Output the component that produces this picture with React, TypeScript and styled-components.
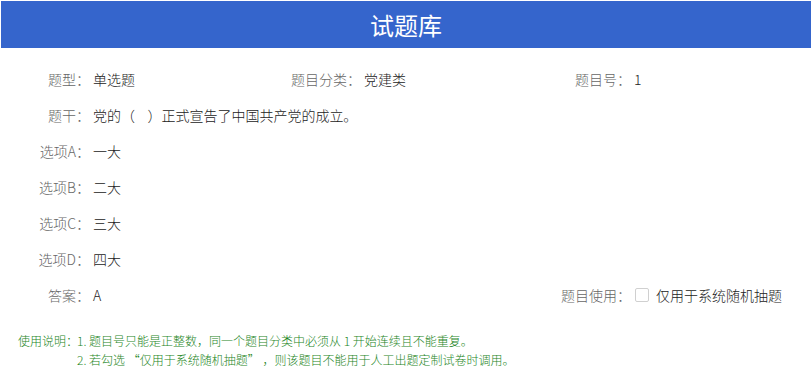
import React from "react";
import styled, { createGlobalStyle } from "styled-components";

const Global = createGlobalStyle`
  html, body { margin: 0; padding: 0; background: #fff; }
  body { font-family: "Noto Sans CJK SC", "Noto Sans", sans-serif; }
`;

const Page = styled.div`
  width: 812px;
  height: 374px;
  overflow: hidden;
  padding-top: 1px;
  box-sizing: border-box;
`;

const Header = styled.header`
  margin: 0 1px 0 1px;
  height: 47px;
  background: #3565cc;
  color: #fff;
  display: flex;
  align-items: center;
  justify-content: center;
  font-size: 24px;
`;

const Form = styled.div`
  display: flex;
  flex-direction: column;
  padding-top: 13px;
`;

const Row = styled.div`
  display: grid;
  grid-template-columns: 270px 270px 270px;
  height: 36px;
  align-items: center;
`;

const Field = styled.div<{ $col?: number; $span?: number }>`
  display: flex;
  align-items: center;
  grid-column: ${(p) => p.$col ?? 1} / span ${(p) => p.$span ?? 1};
  font-size: 14px;
  line-height: 20px;
  font-weight: 300;
  white-space: nowrap;
`;

const Label = styled.span<{ $w?: number }>`
  width: ${(p) => p.$w ?? 90}px;
  text-align: right;
  color: #666;
  flex: none;
`;

const Value = styled.span<{ $gap?: number }>`
  color: #222;
  margin-left: ${(p) => p.$gap ?? 3}px;
`;

const Check = styled.span`
  width: 12px;
  height: 12px;
  border: 1px solid #d0d0d0;
  border-radius: 2px;
  margin-left: 4px;
  margin-right: 7px;
  flex: none;
  background: #fff;
`;

const Notes = styled.div`
  display: grid;
  grid-template-columns: 59px auto;
  margin-top: 18px;
  padding-left: 18px;
  font-size: 12px;
  line-height: 19px;
  font-weight: 300;
  color: #1d861d;
  white-space: nowrap;
`;

const NoteLabel = styled.span``;
const NoteList = styled.div`
  display: flex;
  flex-direction: column;
`;

export default function App() {
  return (
    <Page>
      <Global />
      <Header>试题库</Header>
      <Form>
        <Row>
          <Field $col={1}>
            <Label>题型：</Label>
            <Value>单选题</Value>
          </Field>
          <Field $col={2}>
            <Label $w={91}>题目分类：</Label>
            <Value>党建类</Value>
          </Field>
          <Field $col={3}>
            <Label $w={91}>题目号：</Label>
            <Value>1</Value>
          </Field>
        </Row>
        <Row>
          <Field $col={1} $span={3}>
            <Label>题干：</Label>
            <Value>党的（&nbsp;&nbsp;&nbsp;&nbsp;）正式宣告了中国共产党的成立。</Value>
          </Field>
        </Row>
        <Row>
          <Field>
            <Label>选项A：</Label>
            <Value>一大</Value>
          </Field>
        </Row>
        <Row>
          <Field>
            <Label>选项B：</Label>
            <Value>二大</Value>
          </Field>
        </Row>
        <Row>
          <Field>
            <Label>选项C：</Label>
            <Value>三大</Value>
          </Field>
        </Row>
        <Row>
          <Field>
            <Label>选项D：</Label>
            <Value>四大</Value>
          </Field>
        </Row>
        <Row>
          <Field $col={1}>
            <Label>答案：</Label>
            <Value>A</Value>
          </Field>
          <Field $col={3}>
            <Label $w={91}>题目使用：</Label>
            <Check />
            <Value $gap={0}>仅用于系统随机抽题</Value>
          </Field>
        </Row>
      </Form>
      <Notes>
        <NoteLabel>使用说明：</NoteLabel>
        <NoteList>
          <span>1. 题目号只能是正整数，同一个题目分类中必须从 1 开始连续且不能重复。</span>
          <span>2. 若勾选 “仅用于系统随机抽题” ，则该题目不能用于人工出题定制试卷时调用。</span>
        </NoteList>
      </Notes>
    </Page>
  );
}
